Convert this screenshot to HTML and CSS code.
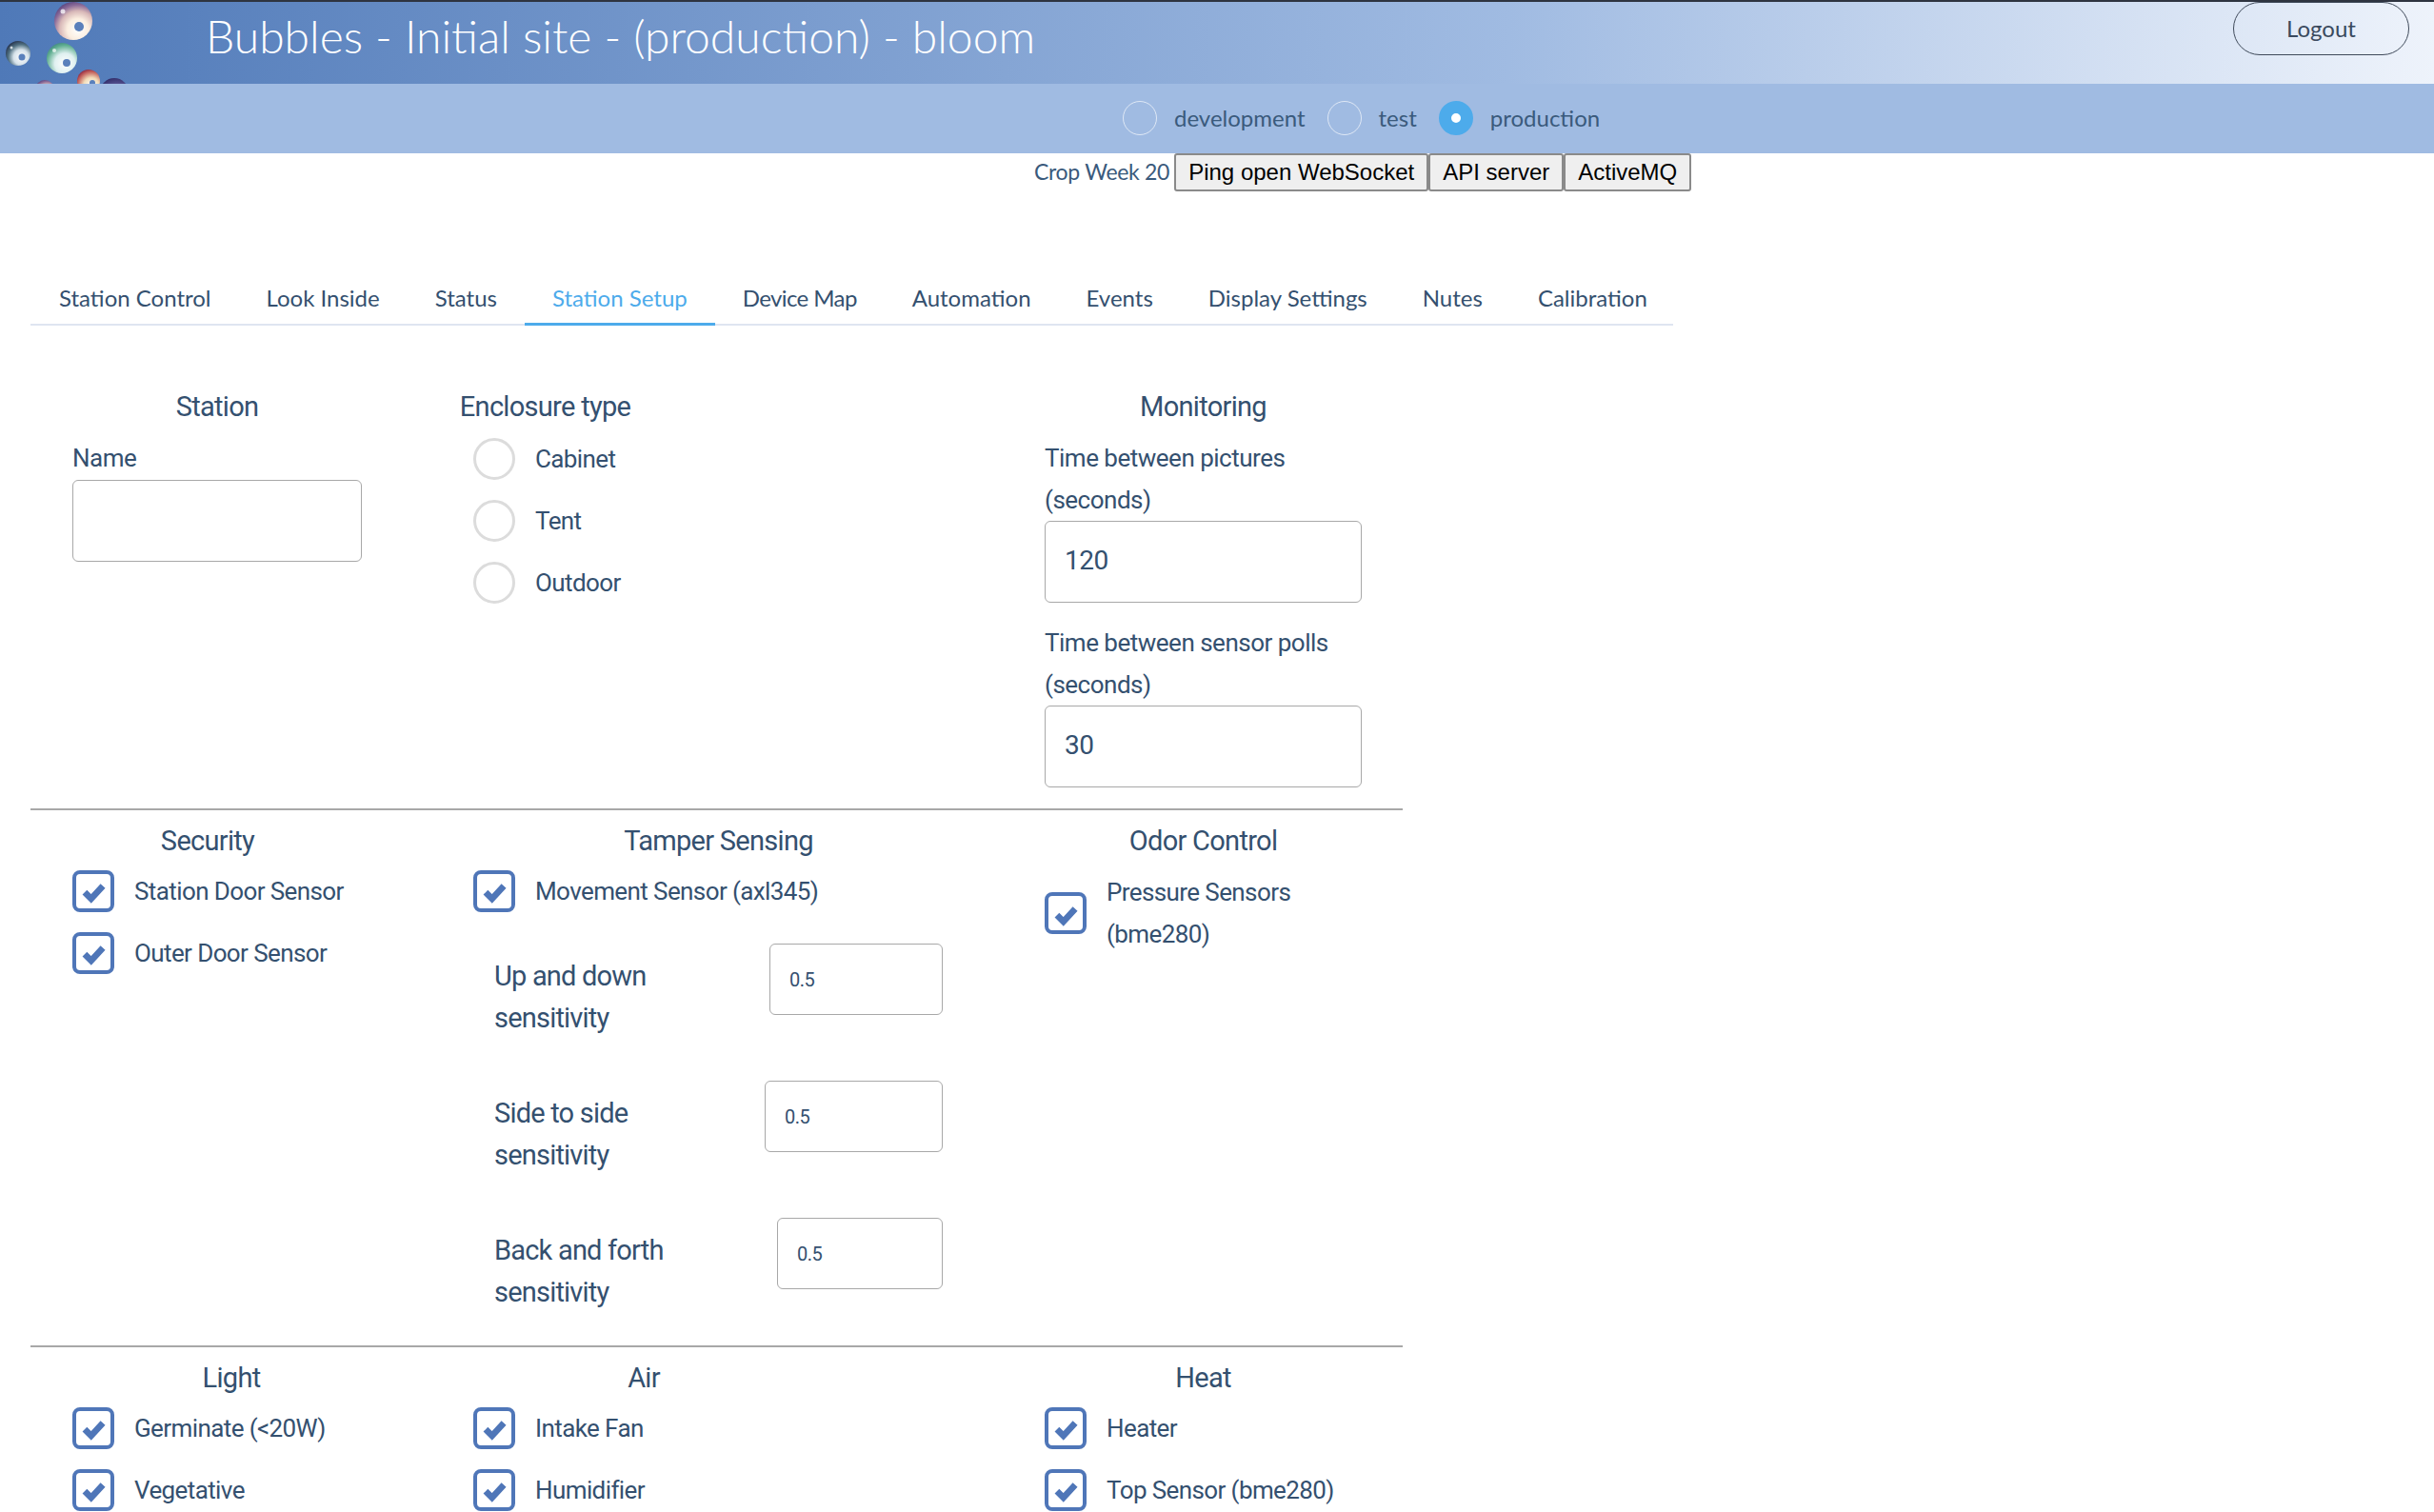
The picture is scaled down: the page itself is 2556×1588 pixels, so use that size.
FILE: index.html
```html
<!DOCTYPE html>
<html lang="en">
<head>
<meta charset="utf-8">
<title>Bubbles - Initial site</title>
<link rel="stylesheet" href="styles.css">
</head>
<body>
<svg class="defs" width="0" height="0" aria-hidden="true">
  <defs>
    <symbol id="check" viewBox="0 0 24 24"><path d="M3.5 13.5l6 6L20.5 7.500"/></symbol>
    <radialGradient id="bPurple" cx="0.62" cy="0.72" r="0.8"><stop offset="0" stop-color="#ffffff"/><stop offset="0.35" stop-color="#fbeee0"/><stop offset="0.6" stop-color="#d8b8b8"/><stop offset="0.8" stop-color="#8a6a98"/><stop offset="1" stop-color="#4a3a78"/></radialGradient>
    <radialGradient id="bTeal" cx="0.62" cy="0.66" r="0.72"><stop offset="0" stop-color="#ffffff"/><stop offset="0.42" stop-color="#d6e2ea"/><stop offset="0.72" stop-color="#4f6f80"/><stop offset="1" stop-color="#222d48"/></radialGradient>
    <radialGradient id="bGreen" cx="0.6" cy="0.68" r="0.75"><stop offset="0" stop-color="#ffffff"/><stop offset="0.45" stop-color="#dff0f0"/><stop offset="0.8" stop-color="#5fae90"/><stop offset="1" stop-color="#3a7f80"/></radialGradient>
    <radialGradient id="bRed" cx="0.62" cy="0.7" r="0.75"><stop offset="0" stop-color="#ffffff"/><stop offset="0.45" stop-color="#f2dcb8"/><stop offset="0.8" stop-color="#c2605c"/><stop offset="1" stop-color="#8a2440"/></radialGradient>
    <radialGradient id="bNavy" cx="0.6" cy="0.75" r="0.8"><stop offset="0" stop-color="#c9c6e0"/><stop offset="0.6" stop-color="#5f5a9a"/><stop offset="1" stop-color="#2e2a66"/></radialGradient>
  </defs>
</svg>

<div class="page">
  <header class="topbar">
    <svg class="bubbles" width="150" height="86" viewBox="0 0 150 86" aria-hidden="true">
      <circle cx="77" cy="20" r="20" fill="url(#bPurple)"/><circle cx="83" cy="26" r="5" fill="#5a80bb"/><circle cx="66" cy="10" r="2.500" fill="#fff" opacity=".75"/>
      <circle cx="19" cy="54" r="13" fill="url(#bTeal)"/><circle cx="23" cy="58" r="3.500" fill="#5a80bb"/><circle cx="12" cy="48" r="1.500" fill="#fff" opacity=".75"/>
      <circle cx="65" cy="59" r="16" fill="url(#bGreen)"/><circle cx="70" cy="64" r="4" fill="#5a80bb"/><circle cx="57" cy="51" r="2" fill="#fff" opacity=".7"/>
      <circle cx="93" cy="83" r="12" fill="url(#bRed)"/><circle cx="97" cy="85" r="3" fill="#5a80bb"/>
      <circle cx="47" cy="92" r="10" fill="url(#bPurple)"/>
      <circle cx="120" cy="95" r="15" fill="url(#bNavy)"/>
    </svg>
    <h1 class="site-title">Bubbles - Initial site - (production) - bloom</h1>
    <button class="logout" type="button">Logout</button>
  </header>

  <div class="envbar">
    <span class="env"><span class="env-dot"></span><span class="env-label">development</span></span>
    <span class="env"><span class="env-dot"></span><span class="env-label">test</span></span>
    <span class="env"><span class="env-dot env-dot-on"></span><span class="env-label">production</span></span>
  </div>

  <div class="toolbar">
    <span class="crop">Crop Week 20</span>
    <button class="tool" type="button">Ping open WebSocket</button>
    <button class="tool" type="button">API server</button>
    <button class="tool" type="button">ActiveMQ</button>
  </div>

  <nav class="tabs">
    <a class="tab">Station Control</a>
    <a class="tab">Look Inside</a>
    <a class="tab">Status</a>
    <a class="tab tab-active">Station Setup</a>
    <a class="tab tab-tight">Device Map</a>
    <a class="tab">Automation</a>
    <a class="tab">Events</a>
    <a class="tab">Display Settings</a>
    <a class="tab">Nutes</a>
    <a class="tab">Calibration</a>
  </nav>

  <main class="form">
    <section class="sec sec-top">
      <div class="col col-station">
        <h2 class="title">Station</h2>
        <label class="lab lab-name">Name</label>
        <input class="field" type="text">
      </div>
      <div class="col col-encl">
        <h2 class="title">Enclosure type</h2>
        <div class="opt opt-r"><span class="radio"></span><span>Cabinet</span></div>
        <div class="opt opt-r"><span class="radio"></span><span>Tent</span></div>
        <div class="opt opt-r"><span class="radio"></span><span>Outdoor</span></div>
      </div>
      <div class="col col-right">
        <h2 class="title">Monitoring</h2>
        <label class="lab lab-name">Time between pictures (seconds)</label>
        <input class="field" type="text" value="120">
        <label class="lab lab-next">Time between sensor polls (seconds)</label>
        <input class="field" type="text" value="30">
      </div>
    </section>

    <section class="sec sec-mid">
      <div class="col col-sec">
        <h2 class="title title-tight">Security</h2>
        <div class="opt"><span class="box"><svg class="tick"><use href="#check"/></svg></span><span>Station Door Sensor</span></div>
        <div class="opt"><span class="box"><svg class="tick"><use href="#check"/></svg></span><span>Outer Door Sensor</span></div>
      </div>
      <div class="col col-tamper">
        <h2 class="title title-tight">Tamper Sensing</h2>
        <div class="opt"><span class="box"><svg class="tick"><use href="#check"/></svg></span><span>Movement Sensor (axl345)</span></div>
        <div class="sens sens-first"><span class="sens-lab">Up and down sensitivity</span><input class="small w1" type="text" value="0.5"></div>
        <div class="sens"><span class="sens-lab">Side to side sensitivity</span><input class="small w2" type="text" value="0.5"></div>
        <div class="sens"><span class="sens-lab">Back and forth sensitivity</span><input class="small w3" type="text" value="0.5"></div>
      </div>
      <div class="col col-right">
        <h2 class="title title-tight">Odor Control</h2>
        <div class="opt opt-two"><span class="box"><svg class="tick"><use href="#check"/></svg></span><span>Pressure Sensors (bme280)</span></div>
      </div>
    </section>

    <section class="sec sec-low">
      <div class="col col-light">
        <h2 class="title title-tight">Light</h2>
        <div class="opt"><span class="box"><svg class="tick"><use href="#check"/></svg></span><span>Germinate (&lt;20W)</span></div>
        <div class="opt"><span class="box"><svg class="tick"><use href="#check"/></svg></span><span>Vegetative</span></div>
      </div>
      <div class="col col-air">
        <h2 class="title title-tight">Air</h2>
        <div class="opt"><span class="box"><svg class="tick"><use href="#check"/></svg></span><span>Intake Fan</span></div>
        <div class="opt"><span class="box"><svg class="tick"><use href="#check"/></svg></span><span>Humidifier</span></div>
      </div>
      <div class="col col-right">
        <h2 class="title title-tight">Heat</h2>
        <div class="opt"><span class="box"><svg class="tick"><use href="#check"/></svg></span><span>Heater</span></div>
        <div class="opt"><span class="box"><svg class="tick"><use href="#check"/></svg></span><span>Top Sensor (bme280)</span></div>
      </div>
    </section>
  </main>
</div>
</body>
</html>
```
FILE: styles.css
```css
* { box-sizing: border-box; }
html, body { margin: 0; padding: 0; height: 100%; overflow: hidden; background: #fff; }
body { font-family: "Roboto", "Liberation Sans", sans-serif; color: #34506f; }
.defs { position: absolute; }
.page { height: 1588px; overflow: hidden; }

.topbar {
  height: 88px; border-top: 2px solid #2e3440; display: flex; position: relative;
  background: linear-gradient(92deg, #4f79b8 0%, #a0bbe2 62%, #eef3fb 100%);
}
.bubbles { position: absolute; left: 0; top: 0; }
.site-title {
  margin: 0 0 0 216px; font-family: "Lato", sans-serif; font-weight: 300; font-size: 48px;
  line-height: 72px; color: #fff; white-space: nowrap;
}
.logout {
  margin-left: auto; margin-right: 26px; width: 185px; height: 56px; border: 1.5px solid #3f4a5a;
  border-radius: 28px; background: transparent; color: #3a4a5e; padding-bottom: 3px;
  font-family: "Lato", sans-serif; font-size: 24px;
}

.envbar {
  height: 73px; background: #a0bbe2; display: flex; align-items: center; padding: 0 0 2px 1179px; gap: 23px;
}
.env { display: flex; align-items: center; gap: 18px; }
.env-dot { width: 36px; height: 36px; flex: none; border-radius: 50%; border: 1.5px solid rgba(255, 255, 255, .65); }
.env-dot-on { border: 13px solid #4dabeb; background: #fff; }
.env-label { font-family: "Lato", sans-serif; font-size: 24px; color: #3a5a7c; }

.toolbar { height: 40px; display: flex; align-items: stretch; padding-left: 1086px; }
.crop { font-family: "Lato", sans-serif; font-size: 23px; letter-spacing: -.3px; line-height: 38px; margin-right: 5px; color: #3a5a7c; white-space: nowrap; }
.tool {
  font-family: "Liberation Sans", sans-serif; font-size: 24px; color: #000; padding: 0 13px;
  background: #efefef; border: 2px solid #8a8a8a; border-radius: 3px; margin: 0; white-space: nowrap;
}

.tabs {
  margin: 85px 0 0 32px; width: 1725px; height: 56px; display: flex; padding-left: 1px; border-bottom: 2px solid #dfe5f1;
}
.tab {
  padding: 0 29px; height: 56px; line-height: 54px; font-family: "Lato", sans-serif; font-size: 24px;
  color: #34506f; border-bottom: 3px solid transparent; white-space: nowrap;
}
.tab-active { color: #4dabeb; border-bottom-color: #4dabeb; }
.tab-tight { letter-spacing: -.6px; }

.form { width: 1441px; margin-left: 32px; }
.sec { display: flex; padding-left: 44px; border-top: 2px solid #a8a8a8; padding-top: 10px; }
.sec-top { border-top: 0; padding-top: 63px; padding-bottom: 22px; }
.sec-mid { padding-bottom: 34px; }
.col { display: flex; flex-direction: column; }
.title { margin: 0; font-size: 29px; font-weight: 400; letter-spacing: -.7px; line-height: 44px; text-align: center; color: #34506f; white-space: nowrap; }
.title-tight { margin-bottom: -2px; }
.lab { font-size: 26px; letter-spacing: -.5px; line-height: 43.5px; display: block; }
.lab-name { margin-top: 11px; }
.lab-next { margin-top: 21px; }
.field {
  width: 100%; height: 86px; border: 1.5px solid #a8a8a8; border-radius: 6px; padding: 0 20px 3px;
  font: 400 28px "Roboto", sans-serif; letter-spacing: -.5px; color: #34506f; background: #fff; outline: 0; display: block; flex: none;
}

.col-station { width: 304px; }
.col-encl { width: 181px; margin-left: 102px; }
.col-right { width: 333px; }
.col-encl + .col-right { margin-left: 434px; }
.col-sec { width: 284px; }
.col-tamper { width: 515px; margin-left: 137px; }
.col-tamper + .col-right { margin-left: 85px; }
.col-light { width: 334px; }
.col-air { width: 358px; margin-left: 87px; }
.col-air + .col-right { margin-left: 242px; }

.opt { display: flex; align-items: center; gap: 21px; min-height: 65px; font-size: 26px; letter-spacing: -.6px; line-height: 44px; white-space: nowrap; }
.opt-r { margin-left: 15px; }
.opt-two { min-height: 88px; margin-top: 12px; white-space: normal; }
.radio { width: 44px; height: 44px; flex: none; border-radius: 50%; border: 3px solid #dcdcdc; background: #fff; }
.box {
  width: 44px; height: 44px; flex: none; border: 4px solid #4f76b8; border-radius: 8px;
  display: flex; align-items: center; justify-content: center;
}
.tick { width: 27px; height: 27px; fill: none; stroke: #4f76b8; stroke-width: 6; }

.sens { display: flex; align-items: flex-start; padding: 0 22px; margin-top: 44px; height: 100px; }
.sens-first { margin-top: 23px; }
.sens-lab { width: 200px; font-size: 29px; letter-spacing: -.8px; line-height: 44px; margin-top: 12px; }
.small {
  margin-left: auto; height: 75px; border: 1.5px solid #a8a8a8; border-radius: 6px; padding: 0 20px;
  font: 400 20px "Roboto", sans-serif; letter-spacing: -.5px; color: #34506f; background: #fff; outline: 0;
}
.w1 { width: 182px; }
.w2 { width: 187px; }
.w3 { width: 174px; }
```
